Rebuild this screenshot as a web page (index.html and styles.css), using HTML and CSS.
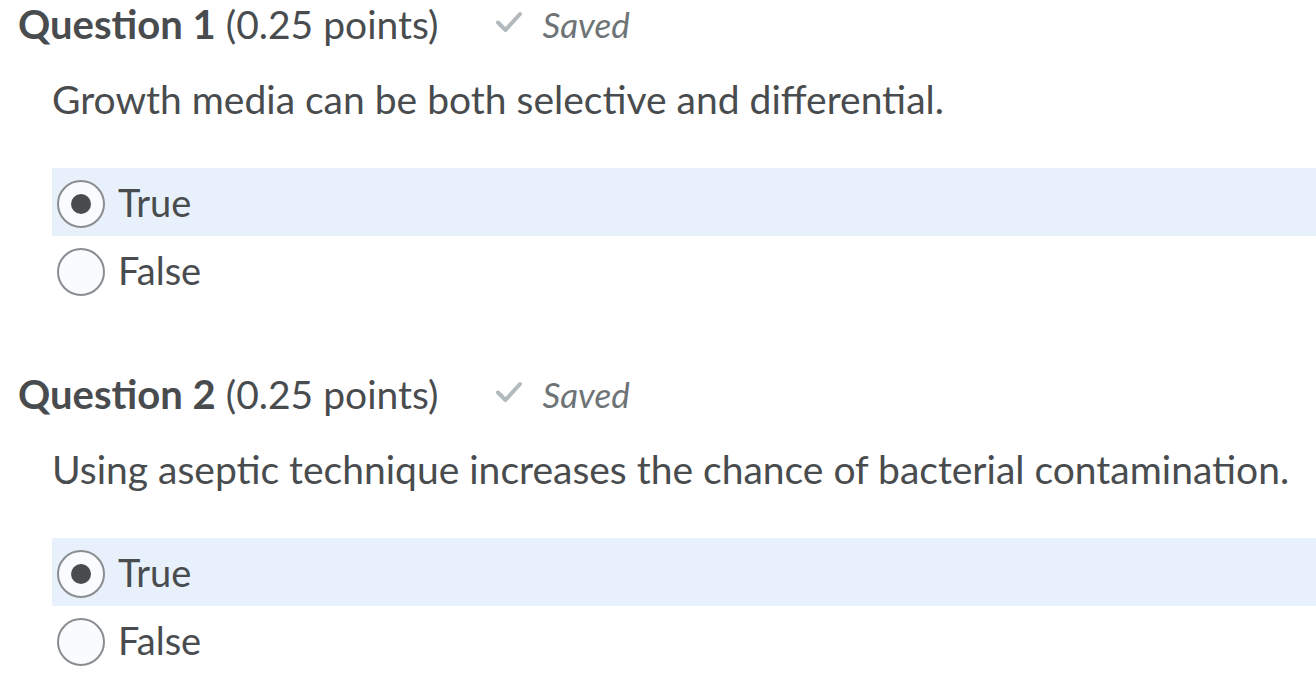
FILE: index.html
```html
<!DOCTYPE html>
<html>
<head>
<meta charset="utf-8">
<link rel="stylesheet" href="styles.css">
</head>
<body>
<div class="quiz">
  <section class="question">
    <h2 class="q-head"><span class="q-title"><strong>Question 1</strong> (0.25 points)</span>
      <span class="saved"><svg class="check" viewBox="0 0 28 22" width="28" height="22"><path d="M3 11.5 L10.5 19 L25 3" fill="none" stroke="#b3babe" stroke-width="4" stroke-linecap="round" stroke-linejoin="round"/></svg><em>Saved</em></span>
    </h2>
    <p class="q-text">Growth media can be both selective and differential.</p>
    <div class="options">
      <label class="opt selected"><span class="radio checked"></span><span class="opt-label">True</span></label>
      <label class="opt"><span class="radio"></span><span class="opt-label">False</span></label>
    </div>
  </section>
  <section class="question">
    <h2 class="q-head"><span class="q-title"><strong>Question 2</strong> (0.25 points)</span>
      <span class="saved"><svg class="check" viewBox="0 0 28 22" width="28" height="22"><path d="M3 11.5 L10.5 19 L25 3" fill="none" stroke="#b3babe" stroke-width="4" stroke-linecap="round" stroke-linejoin="round"/></svg><em>Saved</em></span>
    </h2>
    <p class="q-text">Using aseptic technique increases the chance of bacterial contamination.</p>
    <div class="options">
      <label class="opt selected"><span class="radio checked"></span><span class="opt-label">True</span></label>
      <label class="opt"><span class="radio"></span><span class="opt-label">False</span></label>
    </div>
  </section>
</div>
</body>
</html>
```
FILE: styles.css
```css
html, body {
  margin: 0;
  padding: 0;
  background: #ffffff;
  overflow: hidden;
}
body {
  font-family: Lato, "Liberation Sans", sans-serif;
  color: #494c4e;
}
.quiz {
  padding-left: 18px;
}
.question {
  height: 370px;
}
.q-head {
  margin: 0;
  height: 48px;
  font-size: 39px;
  font-weight: 400;
  line-height: 48px;
  display: flex;
  align-items: center;
}
.q-title {
  white-space: nowrap;
}
.q-head strong {
  font-weight: 700;
  font-size: 40px;
}
.saved {
  display: inline-flex;
  align-items: center;
  margin-left: 57px;
}
.check {
  margin-right: 19px;
  margin-top: -4px;
}
.saved em {
  font-size: 35px;
  font-style: italic;
  color: #6e7376;
}
.q-text {
  margin: 27px 0 0 34px;
  font-size: 39px;
  line-height: 48px;
}
.options {
  margin: 45px 0 0 34px;
}
.opt {
  display: flex;
  align-items: center;
  height: 68px;
  font-size: 38px;
}
.opt.selected {
  background: #e8f1fb;
}
.radio {
  box-sizing: border-box;
  width: 48px;
  height: 48px;
  border: 2.5px solid #8a8d90;
  border-radius: 50%;
  background: #f9fbff;
  margin-left: 5px;
  margin-right: 13px;
  margin-top: 4px;
  display: flex;
  align-items: center;
  justify-content: center;
}
.radio.checked::after {
  content: "";
  width: 20px;
  height: 20px;
  border-radius: 50%;
  background: #494c4e;
}
```
